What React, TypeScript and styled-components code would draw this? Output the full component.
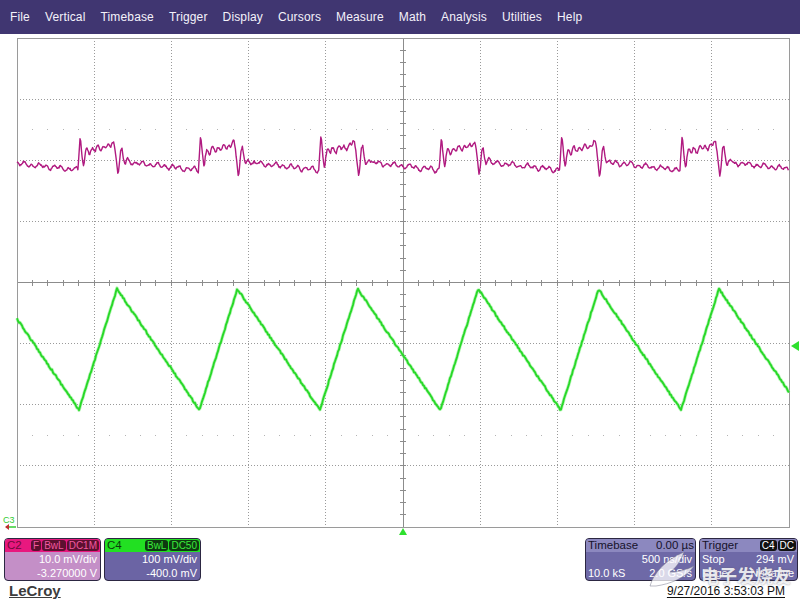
import React from 'react';
import styled, { createGlobalStyle } from 'styled-components';

const Global = createGlobalStyle`
  html, body { margin: 0; padding: 0; background: #fff; overflow: hidden; }
  body { font-family: "Liberation Sans", Arial, sans-serif; }
`;

const Screen = styled.div`
  position: relative;
  width: 800px;
  height: 600px;
  display: flex;
  flex-direction: column;
  background: #fff;
  overflow: hidden;
`;

const MenuBar = styled.nav`
  height: 34px;
  flex: none;
  background: #403671;
  display: flex;
  align-items: center;
  gap: 15px;
  padding: 0 0 1px 10px;
  box-sizing: border-box;
`;

const MenuItem = styled.span`
  color: #f4f2fa;
  font-size: 12px;
  letter-spacing: 0.15px;
`;

const ScopeSvg = styled.svg`
  display: block;
  flex: none;
  width: 800px;
  height: 502px;
`;

const BottomArea = styled.div`
  flex: 1;
  display: flex;
  flex-direction: column;
`;

const PanelsRow = styled.div`
  display: flex;
  justify-content: space-between;
  padding: 2px 2px 0 4px;
  height: 45px;
  box-sizing: border-box;
`;

const PanelGroup = styled.div`
  display: flex;
  gap: 3px;
`;

const Panel = styled.div<{ $w: number; $body: string }>`
  width: ${(p) => p.$w}px;
  height: 43px;
  box-sizing: border-box;
  border: 1px solid #2c2742;
  border-radius: 4px;
  background: ${(p) => p.$body};
  overflow: hidden;
  display: flex;
  flex-direction: column;
  font-size: 11px;
  color: #fff;
`;

const PanelHead = styled.div<{ $bg: string; $fg: string }>`
  height: 13px;
  flex: none;
  background: ${(p) => p.$bg};
  color: ${(p) => p.$fg};
  display: flex;
  align-items: center;
  justify-content: space-between;
  padding: 0 1px 0 2px;
  font-size: 11.5px;
  line-height: 13px;
`;

const Badges = styled.div`
  display: flex;
  gap: 1px;
`;

const Badge = styled.span<{ $bg: string; $fg: string }>`
  background: ${(p) => p.$bg};
  color: ${(p) => p.$fg};
  border-radius: 3px;
  padding: 0 2px;
  font-size: 10px;
  line-height: 11px;
`;

const PanelRow = styled.div<{ $align?: string }>`
  flex: 1;
  display: flex;
  justify-content: ${(p) => p.$align || 'space-between'};
  align-items: center;
  padding: 0 3px 0 2px;
  line-height: 13px;
`;

const Footer = styled.div`
  flex: 1;
  display: flex;
  justify-content: space-between;
  align-items: flex-start;
  padding: 1px 15px 0 9px;
`;

const Logo = styled.span`
  font-size: 15px;
  font-weight: bold;
  color: #3c3c3c;
  text-decoration: underline;
  text-underline-offset: 1px;
`;

const DateText = styled.span`
  font-size: 12px;
  color: #111;
  margin-top: 2px;
  text-decoration: underline;
  text-underline-offset: 2px;
`;

const Watermark = styled.div`
  position: absolute;
  left: 701px;
  top: 562px;
  font-family: "Noto Sans CJK SC", sans-serif;
  font-weight: bold;
  font-size: 18px;
  color: rgba(255, 255, 255, 0.85);
  text-shadow: 0 0 2px rgba(90, 90, 110, 0.7);
  pointer-events: none;
`;

const WatermarkMark = styled.svg`
  position: absolute;
  left: 640px;
  top: 546px;
  width: 62px;
  height: 46px;
  pointer-events: none;
`;

// ---------- waveform generation ----------
const X0 = 17;
const X1 = 789;
const Y0 = 38;
const Y1 = 527;
const DX = (X1 - X0) / 10;
const DY = (Y1 - Y0) / 8;
const P = 120.4;

function makeRand(seed: number) {
  let s = seed;
  return () => {
    s = (s * 16807) % 2147483647;
    return s / 2147483647;
  };
}

function phase(x: number, t0: number) {
  let u = (x - t0) % P;
  if (u < 0) u += P;
  return u;
}

function greenPath() {
  const r = makeRand(12345);
  const pts: string[] = [];
  for (let x = X0; x <= X1; x += 1) {
    const u = phase(x, 79);
    let y = u < 38 ? 410 - (121 * u) / 38 : 289 + (121 * (u - 38)) / (P - 38);
    y += (r() - 0.5) * 1.8;
    pts.push(`${x.toFixed(1)},${y.toFixed(1)}`);
  }
  return 'M' + pts.join('L');
}

// burst key points: [u, y]
const BURST: [number, number][] = [
  [0, 169], [1.2, 150], [2.2, 135], [3.2, 146], [4.5, 160], [5.8, 168], [7, 156], [8.5, 148],
  [10, 151], [11.5, 155], [13, 149], [14.5, 147], [16, 151], [17.5, 152], [19, 147], [20.5, 146],
  [22, 150], [23.5, 149], [25, 145], [26.5, 147], [28, 149], [29.5, 146], [31, 144], [32.5, 147],
  [34, 142], [35.5, 141], [37, 150], [38.5, 163], [40, 177], [41.2, 166], [42.5, 150], [44, 147],
  [45.5, 158], [47, 165], [48.5, 161], [50, 159], [52, 163], [54, 164], [56, 162],
];

function burstY(u: number) {
  for (let i = 0; i < BURST.length - 1; i++) {
    const [ua, ya] = BURST[i];
    const [ub, yb] = BURST[i + 1];
    if (u >= ua && u <= ub) return ya + ((yb - ya) * (u - ua)) / (ub - ua);
  }
  return BURST[BURST.length - 1][1];
}

function purplePath() {
  const r = makeRand(777);
  const pts: string[] = [];
  let k = 0;
  for (let x = X0; x <= X1; x += 0.7) {
    const u = phase(x, 78);
    const cycle = Math.floor((x - 78) / P);
    let y: number;
    if (u <= 56) {
      y = burstY(u) + (r() - 0.5) * 1.6 + Math.sin(cycle * 2.1 + u * 0.6) * 1.2;
    } else {
      const base = 163 + (7 * (u - 56)) / (P - 56);
      y = base + 1.8 * Math.sin(u * 0.85 + cycle * 1.7) + 1.2 * Math.sin(u * 0.37 + cycle) + (r() - 0.5) * 1.6;
    }
    k++;
    pts.push(`${x.toFixed(1)},${y.toFixed(1)}`);
  }
  return 'M' + pts.join('L');
}

const GREEN = greenPath();
const PURPLE = purplePath();

const Grid: React.FC = () => {
  const els: React.ReactNode[] = [];
  for (let k = 1; k < 10; k++) {
    if (k === 5) continue;
    const x = X0 + DX * k;
    els.push(
      <line key={'v' + k} x1={x} y1={Y0} x2={x} y2={Y1} stroke="#9a9a9a" strokeWidth={1} strokeDasharray="1 2" />
    );
  }
  for (let k = 1; k < 8; k++) {
    if (k === 4) continue;
    const y = Y0 + DY * k;
    els.push(
      <line key={'h' + k} x1={X0} y1={y} x2={X1} y2={y} stroke="#9a9a9a" strokeWidth={1} strokeDasharray="1 2" />
    );
  }
  const cx = X0 + DX * 5;
  const cy = Y0 + DY * 4;
  els.push(<line key="cv" x1={cx} y1={Y0} x2={cx} y2={Y1} stroke="#8c8c8c" strokeWidth={1} />);
  els.push(<line key="ch" x1={X0} y1={cy} x2={X1} y2={cy} stroke="#8c8c8c" strokeWidth={1} />);
  for (let i = 1; i < 50; i++) {
    const x = X0 + (DX / 5) * i;
    els.push(<line key={'tx' + i} x1={x} y1={cy - 3} x2={x} y2={cy + 3} stroke="#8c8c8c" strokeWidth={1} />);
  }
  for (let i = 1; i < 40; i++) {
    const y = Y0 + (DY / 5) * i;
    els.push(<line key={'ty' + i} x1={cx - 3} y1={y} x2={cx + 3} y2={y} stroke="#8c8c8c" strokeWidth={1} />);
  }
  [Y0 + DY * 1.5, Y0 + DY * 6.5].forEach((y, j) => {
    for (let i = 1; i < 50; i++) {
      if (i % 5 === 0) continue;
      const x = X0 + (DX / 5) * i;
      els.push(<rect key={'d' + j + '-' + i} x={x - 0.5} y={y - 0.5} width={1} height={1} fill="#b4b4b4" />);
    }
  });
  els.push(
    <rect key="border" x={X0} y={Y0} width={X1 - X0} height={Y1 - Y0} fill="none" stroke="#9a9a9a" strokeWidth={1} />
  );
  return <g shapeRendering="crispEdges">{els}</g>;
};

const channelsLeft = [
  {
    name: 'C2',
    head: '#e8187f',
    headFg: '#6e0a3a',
    badgeBg: '#5c1030',
    badgeFg: '#f05aa0',
    body: '#c48fc7',
    badges: ['F', 'BwL', 'DC1M'],
    rows: ['10.0 mV/div', '-3.270000 V'],
  },
  {
    name: 'C4',
    head: '#22e022',
    headFg: '#0a3a0a',
    badgeBg: '#0e3a10',
    badgeFg: '#3bea3b',
    body: '#6b64a4',
    badges: ['BwL', 'DC50'],
    rows: ['100 mV/div', '-400.0 mV'],
  },
];

export default function App() {
  const menu = ['File', 'Vertical', 'Timebase', 'Trigger', 'Display', 'Cursors', 'Measure', 'Math', 'Analysis', 'Utilities', 'Help'];
  return (
    <>
      <Global />
      <Screen>
        <MenuBar>
          {menu.map((m) => (
            <MenuItem key={m}>{m}</MenuItem>
          ))}
        </MenuBar>
        <ScopeSvg viewBox="0 34 800 502">
          <Grid />
          <path d={PURPLE} fill="none" stroke="#b01a80" strokeWidth={1.4} strokeLinejoin="round" />
          <path d={GREEN} fill="none" stroke="#8cf08c" strokeWidth={3.4} strokeLinejoin="round" opacity={0.6} />
          <path d={GREEN} fill="none" stroke="#28d828" strokeWidth={1.9} strokeLinejoin="round" />
          <polygon points="791,346 799,341 799,351" fill="#2ee02e" />
          <polygon points="403,528 399,535 407,535" fill="#2ee02e" />
          <text x={3} y={523} fontSize={9} fill="#33cc33" fontFamily="Liberation Sans, sans-serif">C3</text>
          <line x1={6} y1={527} x2={16} y2={527} stroke="#33cc33" strokeWidth={1.5} />
          <polygon points="5,527 9,524 9,530" fill="#c03030" />
        </ScopeSvg>
        <BottomArea>
          <PanelsRow>
            <PanelGroup>
              {channelsLeft.map((c) => (
                <Panel key={c.name} $w={97} $body={c.body}>
                  <PanelHead $bg={c.head} $fg={c.headFg}>
                    <span>{c.name}</span>
                    <Badges>
                      {c.badges.map((b) => (
                        <Badge key={b} $bg={c.badgeBg} $fg={c.badgeFg}>
                          {b}
                        </Badge>
                      ))}
                    </Badges>
                  </PanelHead>
                  <PanelRow $align="flex-end">{c.rows[0]}</PanelRow>
                  <PanelRow $align="flex-end">{c.rows[1]}</PanelRow>
                </Panel>
              ))}
            </PanelGroup>
            <PanelGroup>
              <Panel $w={111} $body="#6e69a7">
                <PanelHead $bg="#8c88bf" $fg="#16122a">
                  <span>Timebase</span>
                  <span>0.00 µs</span>
                </PanelHead>
                <PanelRow $align="flex-end">500 ns/div</PanelRow>
                <PanelRow>
                  <span>10.0 kS</span>
                  <span>2.0 GS/s</span>
                </PanelRow>
              </Panel>
              <Panel $w={99} $body="#6e69a7">
                <PanelHead $bg="#8c88bf" $fg="#16122a">
                  <span>Trigger</span>
                  <Badges>
                    <Badge $bg="#111" $fg="#fff">C4</Badge>
                    <Badge $bg="#111" $fg="#fff">DC</Badge>
                  </Badges>
                </PanelHead>
                <PanelRow>
                  <span>Stop</span>
                  <span>294 mV</span>
                </PanelRow>
                <PanelRow>
                  <span>Edge</span>
                  <span>Negative</span>
                </PanelRow>
              </Panel>
            </PanelGroup>
          </PanelsRow>
          <Footer>
            <Logo>LeCroy</Logo>
            <DateText>9/27/2016 3:53:03 PM</DateText>
          </Footer>
        </BottomArea>
        <WatermarkMark viewBox="0 0 62 46">
          <path
            d="M10 40 C 14 26, 26 14, 44 6 C 40 16, 36 22, 30 26 C 38 26, 46 24, 54 20 C 46 32, 30 38, 16 40 Z"
            fill="rgba(255,255,255,0.75)"
            stroke="rgba(120,120,140,0.5)"
            strokeWidth={1}
          />
        </WatermarkMark>
        <Watermark>电子发烧友</Watermark>
      </Screen>
    </>
  );
}
